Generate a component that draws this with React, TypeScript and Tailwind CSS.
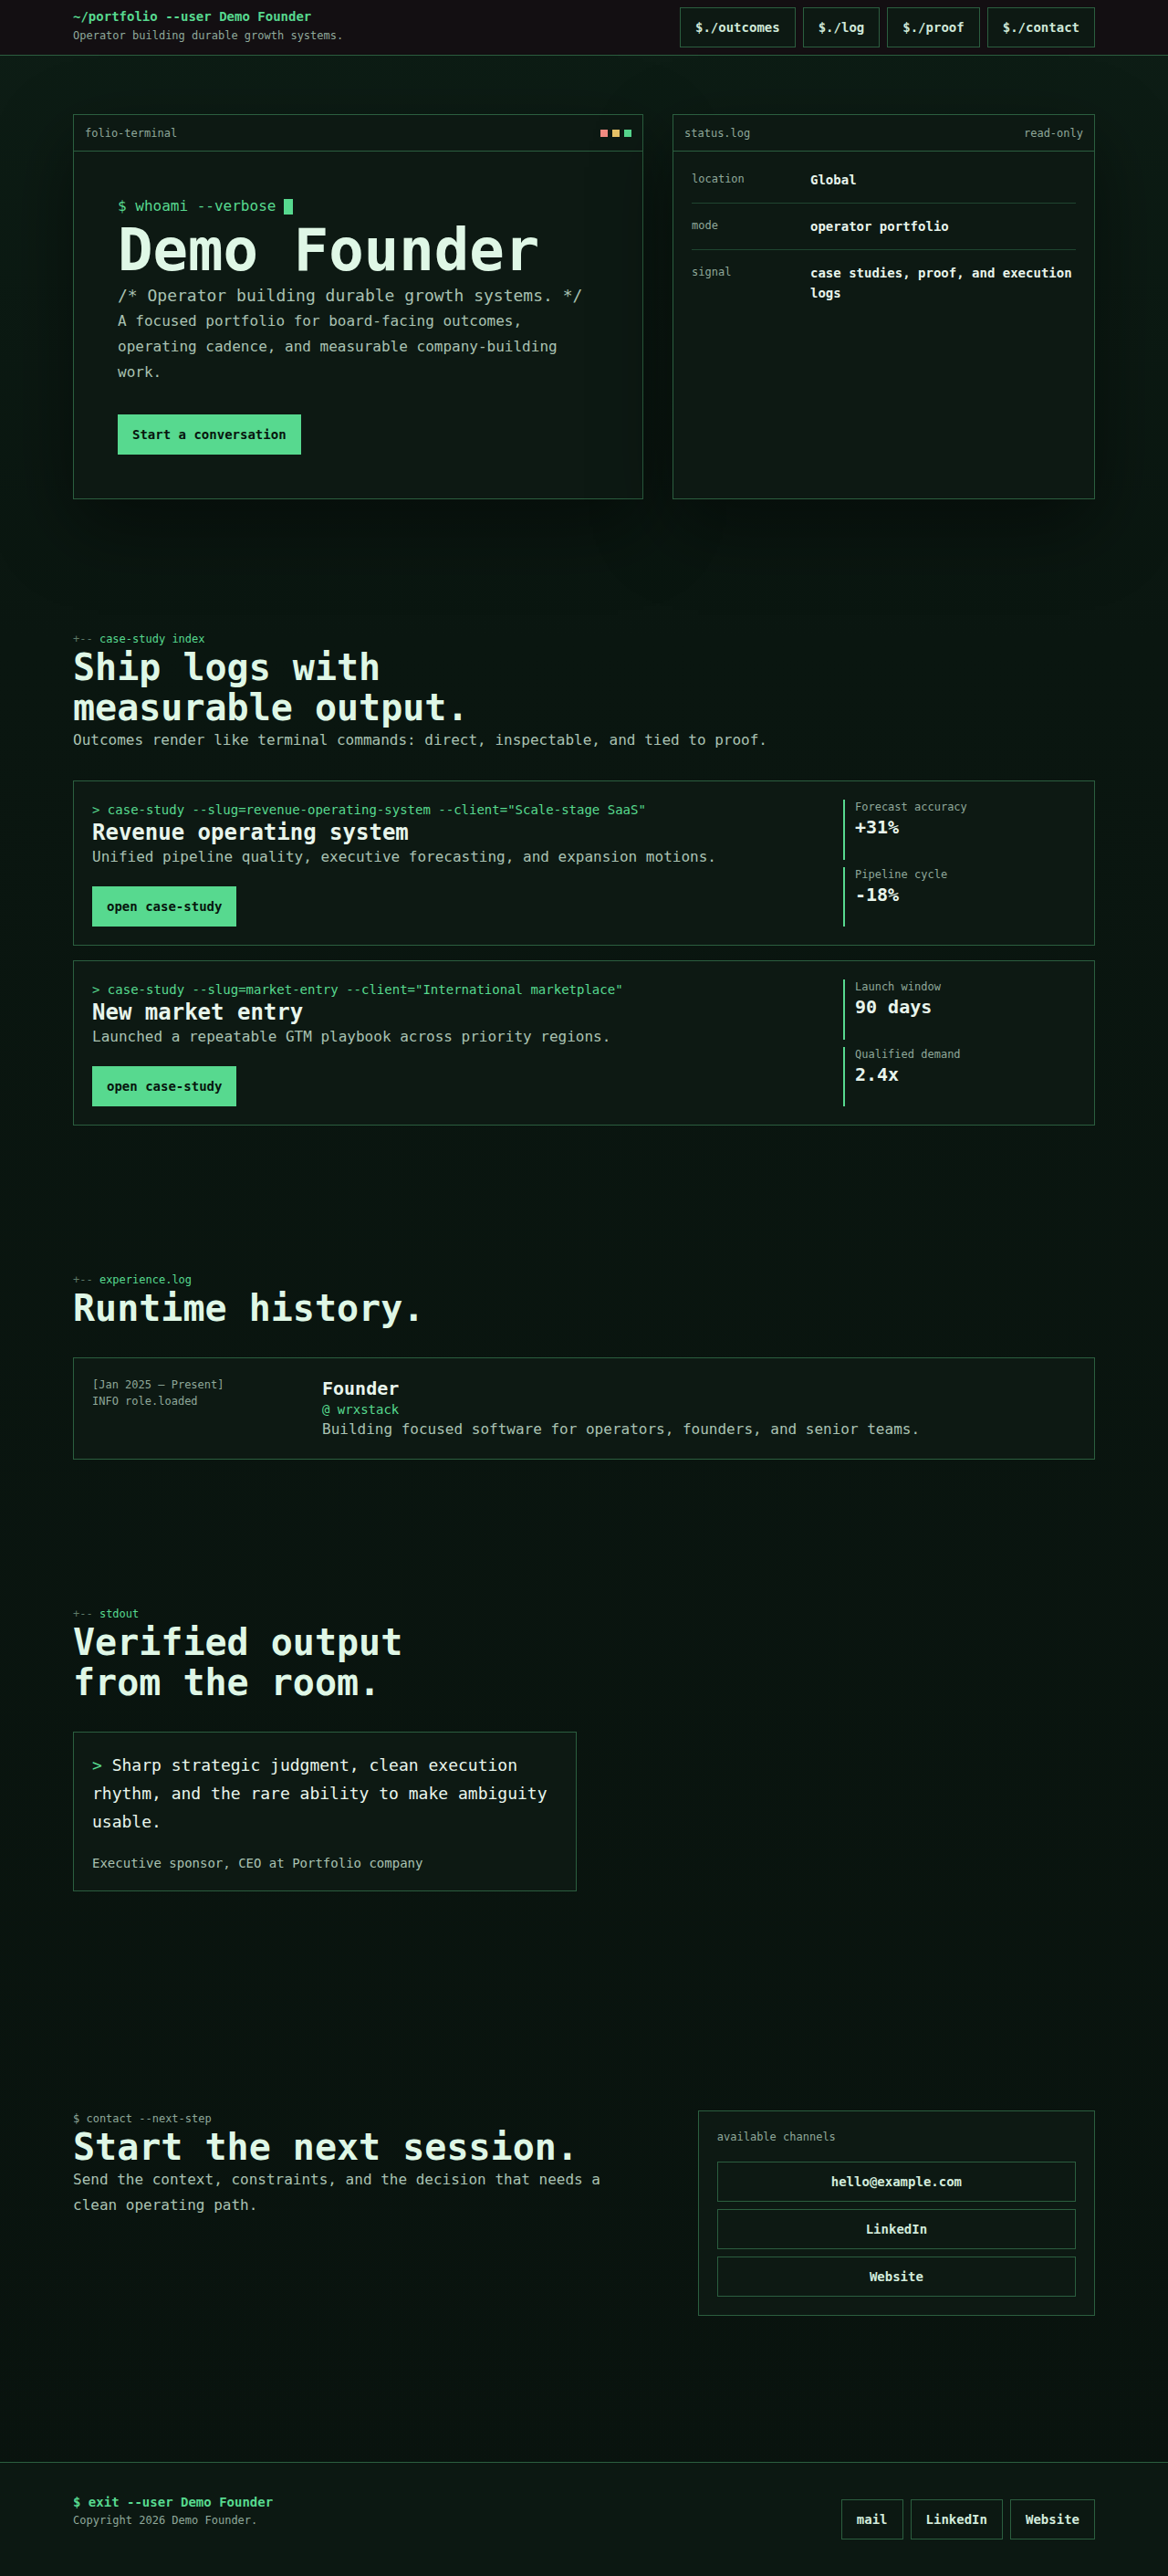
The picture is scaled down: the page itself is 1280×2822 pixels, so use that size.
const border = "border border-[#2b5e3f]";

const navLinks = ["$./outcomes", "$./log", "$./proof", "$./contact"];

const caseStudies = [
  {
    command: '> case-study --slug=revenue-operating-system --client="Scale-stage SaaS"',
    title: "Revenue operating system",
    desc: "Unified pipeline quality, executive forecasting, and expansion motions.",
    metrics: [
      { label: "Forecast accuracy", value: "+31%" },
      { label: "Pipeline cycle", value: "-18%" },
    ],
  },
  {
    command: '> case-study --slug=market-entry --client="International marketplace"',
    title: "New market entry",
    desc: "Launched a repeatable GTM playbook across priority regions.",
    metrics: [
      { label: "Launch window", value: "90 days" },
      { label: "Qualified demand", value: "2.4x" },
    ],
  },
];

const statusRows = [
  { label: "location", value: "Global" },
  { label: "mode", value: "operator portfolio" },
  { label: "signal", value: "case studies, proof, and execution logs" },
];

function SectionLabel({ text }: { text: string }) {
  return (
    <div className="text-xs leading-[18px]">
      <span className="text-[#5d7a68]">+-- </span>
      <span className="text-[#57d98f]">{text}</span>
    </div>
  );
}

function Heading({ children }: { children: React.ReactNode }) {
  return (
    <h2 className="max-w-[460px] text-[40px] font-bold leading-[1.1] text-[#dff7e6]">
      {children}
    </h2>
  );
}

export default function App() {
  return (
    <div className="min-h-screen bg-[linear-gradient(180deg,#0d1d15_0px,#0a1610_700px,#09130e_100%)] font-['DejaVu_Sans_Mono',monospace] text-[#a9c2b2]">
      {/* header */}
      <header className="border-b border-[#2b5e3f] bg-[#130f12]">
        <div className="mx-auto flex w-[1120px] items-start justify-between py-2">
          <div className="flex flex-col gap-[3px]">
            <div className="text-sm font-bold leading-5 text-[#57d98f]">~/portfolio --user Demo Founder</div>
            <div className="text-xs leading-4 text-[#8fa89a]">Operator building durable growth systems.</div>
          </div>
          <nav className="flex gap-2">
            {navLinks.map((l) => (
              <a
                key={l}
                className={`${border} flex h-11 items-center bg-[#0d1913] px-4 text-sm font-bold text-[#cfe8d8]`}
              >
                {l}
              </a>
            ))}
          </nav>
        </div>
      </header>

      {/* hero */}
      <section className="pt-16 pb-16">
        <div className="mx-auto grid w-[1120px] grid-cols-[1.35fr_1fr] gap-8">
          <div className={`${border} bg-[#0d1913] shadow-[0_30px_80px_rgba(0,0,0,0.45)]`}>
            <div className="flex h-10 items-center justify-between border-b border-[#2b5e3f] px-3">
              <span className="text-xs text-[#8fa89a]">folio-terminal</span>
              <div className="flex gap-[5px]">
                <span className="h-2 w-2 bg-[#f28b82]" />
                <span className="h-2 w-2 bg-[#e8c468]" />
                <span className="h-2 w-2 bg-[#57d98f]" />
              </div>
            </div>
            <div className="p-12">
              <div className="mb-1 flex items-center text-base leading-6 text-[#57d98f]">
                $ whoami --verbose
                <span className="ml-[9px] inline-block h-[17px] w-[10px] bg-[#57d98f]" />
              </div>
              <h1 className="text-[64px] font-bold leading-none text-[#dff7e6]">Demo Founder</h1>
              <p className="mt-1 text-lg leading-7 text-[#a9c2b2]">/* Operator building durable growth systems. */</p>
              <p className="max-w-[500px] text-base leading-7 text-[#a9c2b2]">
                A focused portfolio for board-facing outcomes, operating cadence, and measurable company-building work.
              </p>
              <a className="mt-8 inline-block bg-[#57d98f] px-4 py-3 text-sm font-bold leading-5 text-[#07140d]">
                Start a conversation
              </a>
            </div>
          </div>

          <div className={`${border} bg-[#0d1913] shadow-[0_30px_80px_rgba(0,0,0,0.45)]`}>
            <div className="flex h-10 items-center justify-between border-b border-[#2b5e3f] px-3 text-xs text-[#8fa89a]">
              <span>status.log</span>
              <span>read-only</span>
            </div>
            <div className="divide-y divide-[#1f4530] p-5">
              {statusRows.map((r) => (
                <div key={r.label} className="grid grid-cols-[130px_1fr] py-[14px] first:pt-0">
                  <span className="text-xs leading-5 text-[#8fa89a]">{r.label}</span>
                  <span className="text-sm font-bold leading-[22px] text-[#e8f5ec]">{r.value}</span>
                </div>
              ))}
            </div>
          </div>
        </div>
      </section>

      {/* case studies */}
      <section className="py-20">
        <div className="mx-auto w-[1120px]">
          <SectionLabel text="case-study index" />
          <Heading>Ship logs with measurable output.</Heading>
          <p className="mt-0.5 text-base leading-6">
            Outcomes render like terminal commands: direct, inspectable, and tied to proof.
          </p>
          <div className="mt-8 flex flex-col gap-4">
            {caseStudies.map((c) => (
              <div key={c.title} className={`${border} grid grid-cols-[1fr_255px] gap-6 bg-[#0d1913] p-5`}>
                <div>
                  <div className="text-sm leading-[22px] text-[#57d98f]">{c.command}</div>
                  <h3 className="text-2xl font-bold leading-[29px] text-[#e8f5ec]">{c.title}</h3>
                  <p className="text-base leading-6">{c.desc}</p>
                  <a className="mt-5 inline-block bg-[#57d98f] px-4 py-3 text-sm font-bold leading-5 text-[#07140d]">
                    open case-study
                  </a>
                </div>
                <div className="flex flex-col gap-2">
                  {c.metrics.map((m) => (
                    <div key={m.label} className="flex-1 border-l-2 border-[#57d98f] pl-[11px]">
                      <div className="text-xs leading-4 text-[#8fa89a]">{m.label}</div>
                      <div className="text-xl font-bold leading-7 text-[#e8f5ec]">{m.value}</div>
                    </div>
                  ))}
                </div>
              </div>
            ))}
          </div>
        </div>
      </section>

      {/* experience */}
      <section className="py-20">
        <div className="mx-auto w-[1120px]">
          <SectionLabel text="experience.log" />
          <Heading>Runtime history.</Heading>
          <div className={`${border} mt-8 grid grid-cols-[228px_1fr] gap-6 bg-[#0d1913] p-5`}>
            <div className="text-xs leading-[18px] text-[#8fa89a]">
              <div>[Jan 2025 – Present]</div>
              <div>INFO role.loaded</div>
            </div>
            <div>
              <h3 className="text-xl font-bold leading-[26px] text-[#e8f5ec]">Founder</h3>
              <div className="text-sm leading-5 text-[#57d98f]">@ wrxstack</div>
              <p className="text-base leading-6">Building focused software for operators, founders, and senior teams.</p>
            </div>
          </div>
        </div>
      </section>

      {/* testimonial */}
      <section className="pt-20 pb-20">
        <div className="mx-auto w-[1120px]">
          <SectionLabel text="stdout" />
          <Heading>Verified output from the room.</Heading>
          <div className={`${border} mt-8 w-[552px] bg-[#0d1913] p-5`}>
            <p className="text-lg leading-[31px] text-[#e8f5ec]">
              <span className="text-[#57d98f]">&gt;</span> Sharp strategic judgment, clean execution rhythm, and the rare
              ability to make ambiguity usable.
            </p>
            <p className="mt-5 text-sm leading-5">Executive sponsor, CEO at Portfolio company</p>
          </div>
        </div>
      </section>

      {/* contact */}
      <section className="pt-40 pb-40">
        <div className="mx-auto grid w-[1120px] grid-cols-[1.5fr_1fr] items-start gap-8">
          <div>
            <div className="text-xs leading-[18px] text-[#8fa89a]">$ contact --next-step</div>
            <h2 className="text-[40px] font-bold leading-[1.1] text-[#dff7e6]">Start the next session.</h2>
            <p className="max-w-[600px] text-base leading-7">
              Send the context, constraints, and the decision that needs a clean operating path.
            </p>
          </div>
          <div className={`${border} bg-[#0d1913] p-5`}>
            <div className="text-xs leading-4 text-[#8fa89a]">available channels</div>
            <div className="mt-[19px] flex flex-col gap-2">
              {["hello@example.com", "LinkedIn", "Website"].map((l) => (
                <a key={l} className={`${border} flex h-11 items-center justify-center text-sm font-bold text-[#d3ecdc]`}>
                  {l}
                </a>
              ))}
            </div>
          </div>
        </div>
      </section>

      {/* footer */}
      <footer className="border-t border-[#2b5e3f] bg-[#0c1812] py-10">
        <div className="mx-auto flex w-[1120px] items-start justify-between">
          <div className="-mt-[7px] flex flex-col gap-0.5">
            <div className="text-sm font-bold leading-5 text-[#57d98f]">$ exit --user Demo Founder</div>
            <div className="text-xs leading-4 text-[#8fa89a]">Copyright 2026 Demo Founder.</div>
          </div>
          <div className="flex gap-2">
            {["mail", "LinkedIn", "Website"].map((l) => (
              <a key={l} className={`${border} flex h-11 items-center px-4 text-sm font-bold text-[#d3ecdc]`}>
                {l}
              </a>
            ))}
          </div>
        </div>
      </footer>
    </div>
  );
}
